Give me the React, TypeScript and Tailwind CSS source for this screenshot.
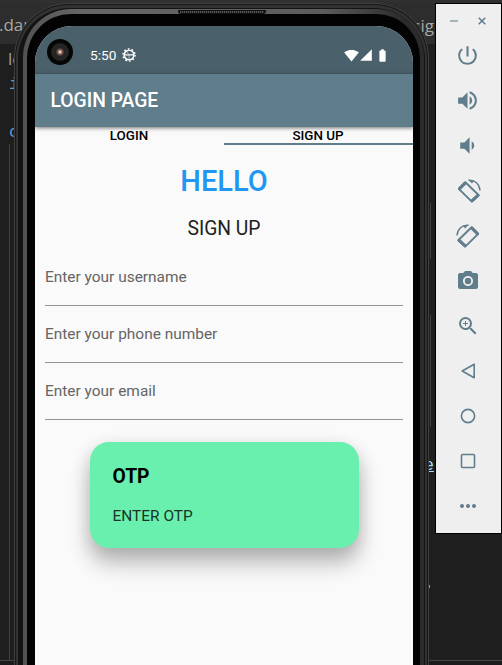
import React from "react";
import {
  MdPowerSettingsNew,
  MdVolumeUp,
  MdVolumeDown,
  MdPhotoCamera,
  MdZoomIn,
  MdSignalWifi4Bar,
  MdSignalCellular4Bar,
  MdBatteryFull,
} from "react-icons/md";

function Editor() {
  return (
    <div className="flex h-full flex-col font-['Open_Sans',sans-serif]">
      <div className="h-[3px] bg-[#303030]" />
      <div className="flex h-[43px] items-center justify-between bg-[#2d2d2d] pr-[68px] text-[17px] leading-none text-[#a8a8a0]">
        <span className="-ml-px pt-[3px]">.dart</span>
        <span className="pt-[4px]">sig</span>
      </div>
      <div className="flex flex-1 justify-between">
        <div className="ml-[9px] font-['Liberation_Mono',monospace] text-[17px] leading-[24.5px] text-[#569cd6]">
          <div className="-ml-px pt-[3px] font-['Open_Sans',sans-serif] text-[#a0a0a0]">le</div>
          <div className="pt-[2px]">im</div>
          <div className="h-[23px]" />
          <div>cl</div>
          <div className="-mt-px h-[516px] w-px bg-[#404040]" />
        </div>
        <div className="mr-[63px] flex flex-col items-end font-['Liberation_Mono',monospace] text-[17px] leading-none text-[#9cdcfe]">
          <div className="mt-[159px] mr-[8px] h-[56px] w-px bg-[#404040]" />
          <div className="mt-[56px] mr-[8px] h-[112px] w-px bg-[#404040]" />
          <div className="mt-[30px] mr-[5px] underline">e</div>
          <div className="mt-[111px] mr-[9px] h-[3px] w-px bg-[#c08a30]" />
        </div>
      </div>
      <div className="h-[5px] border-t border-[#454545] bg-[#1c1a1c]" />
    </div>
  );
}

function Gear() {
  return (
    <svg className="size-[14px]" viewBox="0 0 14 14" fill="none" stroke="white">
      <circle cx="7" cy="7" r="4.8" strokeWidth="1.6" />
      <circle cx="7" cy="7" r="6.1" strokeWidth="1.4" strokeDasharray="1.7 2.13" />
      <path d="M2.5 6.8h9" strokeWidth="1.2" />
      <path d="M7 7v4.5M7 7L4.5 3" strokeWidth=".8" opacity=".6" />
    </svg>
  );
}

function StatusBar() {
  return (
    <div className="flex h-[48px] items-center bg-[#4a606a] pt-[10px] pr-[23px] pl-[12px] text-white">
      <div className="-mt-[7px] flex size-[26px] shrink-0 items-center justify-center rounded-full bg-[#050505]">
        <div className="flex size-[18px] items-center justify-center rounded-full bg-[#242424]">
          <div className="size-[8px] rounded-full bg-[radial-gradient(circle,#e8cdbd_12%,#6d5148_45%,#242424_85%)]" />
        </div>
      </div>
      <span className="ml-[17px] pt-px text-[13.7px] leading-none">5:50</span>
      <span className="ml-[6px]"><Gear /></span>
      <span className="flex-1" />
      <MdSignalWifi4Bar className="size-[15px]" />
      <MdSignalCellular4Bar className="size-[14px]" />
      <MdBatteryFull className="ml-[2px] size-[15px]" />
    </div>
  );
}

function Field({ label }: { label: string }) {
  return (
    <div className="mx-[10px] h-[57px] border-b border-[#949494] pt-[18px] text-[15.45px] leading-[20px] text-[#656565]">
      {label}
    </div>
  );
}

function Screen() {
  return (
    <div className="h-full overflow-hidden rounded-t-[37px] bg-[#fafafa] font-[Roboto,sans-serif]">
      <StatusBar />
      <div className="relative flex h-[53px] items-center bg-[#607d8b] pt-px pl-[15.5px] text-[19.3px] font-medium text-white shadow-[0_1px_4px_rgba(0,0,0,0.55)]">
        LOGIN PAGE
      </div>
      <div className="grid h-[18px] grid-cols-2 text-center text-[13.4px] leading-[17px] font-medium text-black">
        <div className="pr-px">LOGIN</div>
        <div className="h-[18px] border-b-2 border-[#607d8b] pr-px">SIGN UP</div>
      </div>
      <div className="mt-[18px] text-center text-[29px] leading-[36px] font-medium text-[#2196f3]">HELLO</div>
      <div className="mt-[18px] text-center text-[19.3px] leading-[24px] text-[#212121]">SIGN UP</div>
      <div className="mt-[8px]">
        <Field label="Enter your username" />
        <Field label="Enter your phone number" />
        <Field label="Enter your email" />
      </div>
      <div className="mt-[22px] ml-[54.5px] h-[106px] w-[269.5px] rounded-[19px] bg-[#69f0ae] pt-[23px] pl-[23px] shadow-[0_16px_22px_0_rgba(0,0,0,0.24),0_4px_18px_rgba(0,0,0,0.13)]">
        <div className="text-[19.3px] leading-[24px] font-bold text-black">OTP</div>
        <div className="mt-[17px] text-[15.45px] leading-[20px] text-[#1b3327]">ENTER OTP</div>
      </div>
    </div>
  );
}

function Phone() {
  return (
    <div className="h-full rounded-t-[55px] bg-[#404040] px-px pt-px">
      <div className="h-full rounded-t-[54px] bg-[#171717] px-px pt-px">
        <div className="h-full rounded-t-[53px] bg-[#323232] px-[2px] pt-[3px]">
          <div className="h-full rounded-t-[51px] bg-[#141414] pt-px pr-px pl-[5px]">
            <div className="h-full rounded-t-[48px] bg-[linear-gradient(90deg,#525252,#555_2%,#666_15%,#5c5c5c_75%,#2b2b2b_95%)] pt-[5px] pr-[4px] pl-[4px]">
              <div className="mx-auto -mt-[4px] flex h-[4px] w-[88px] -translate-x-[2px] items-center rounded-b-[3px] bg-[#111] px-[2px]">
                <div className="h-[2px] w-full bg-[repeating-linear-gradient(90deg,#555_0,#555_1px,#222_1px,#222_2px)]" />
              </div>
              <div className="h-full rounded-t-[44px] bg-[#030303] pt-[12px] pr-[7px] pl-[8px]">
                <Screen />
              </div>
            </div>
          </div>
        </div>
      </div>
    </div>
  );
}

function Rotate({ flip = false }: { flip?: boolean }) {
  return (
    <svg className={flip ? "size-[24px] -scale-x-100" : "size-[24px] translate-x-px"} viewBox="0 0 24 24" fill="none" stroke="currentColor">
      <path d="M1.8 9.9L8.4 3.2L21.8 16.2L14.8 22.6Z" strokeWidth="1.9" strokeLinejoin="round" />
      <path d="M2.6 9.7L8.1 4.2M15.2 21.6L20.8 16.4" strokeWidth="3.2" strokeLinecap="round" />
      <path d="M11.5 1.3C18 .8 22.5 5 23 11.5" strokeWidth="1.4" />
      <path d="M11.3.8L17 1.6L15 4.4Z" fill="currentColor" stroke="none" />
    </svg>
  );
}

function Toolbar() {
  const tools = [
    <MdPowerSettingsNew className="size-[25px]" />,
    <MdVolumeUp className="size-[25px]" />,
    <MdVolumeDown className="size-[25px]" />,
    <Rotate />,
    <Rotate flip />,
    <MdPhotoCamera className="size-[24px]" />,
    <MdZoomIn className="size-[24px]" />,
    <svg className="size-[16px]" viewBox="0 0 16 16" fill="none" stroke="currentColor" strokeWidth="1.6"><path d="M14.2 1.2v13.6L2.2 8Z" strokeLinejoin="round" /></svg>,
    <svg className="size-[16px]" viewBox="0 0 16 16" fill="none" stroke="currentColor" strokeWidth="1.6"><circle cx="8" cy="8" r="6.6" /></svg>,
    <svg className="size-[16px]" viewBox="0 0 16 16" fill="none" stroke="currentColor" strokeWidth="1.6"><rect x="1.5" y="1.5" width="13" height="13" rx="1" /></svg>,
    <svg className="size-[16px]" viewBox="0 0 16 16" fill="currentColor"><circle cx="2" cy="8" r="2" /><circle cx="8" cy="8" r="2" /><circle cx="14" cy="8" r="2" /></svg>,
  ];
  return (
    <div className="h-full border border-black bg-[#efefef] text-[#607d8b]">
      <div className="flex h-[29px] items-center justify-between pt-[5px] pr-[15px] pl-[14px]">
        <div className="h-[2px] w-[8px] bg-[#a5b4bb]" />
        <svg className="size-[8px]" viewBox="0 0 8 8" stroke="currentColor" strokeWidth="1.5"><path d="M.7.7l6.6 6.6M7.3.7L.7 7.3" /></svg>
      </div>
      {tools.map((tool, i) => (
        <div key={i} className="flex h-[45px] items-center justify-center pr-[2px]">{tool}</div>
      ))}
    </div>
  );
}

export default function App() {
  return (
    <div className="relative h-[665px] w-[502px] overflow-hidden bg-[#1e1e1e]">
      <Editor />
      <div className="absolute top-[3px] left-[14px] h-[700px] w-[415px]"><Phone /></div>
      <div className="absolute top-[3px] left-[435px] h-[531px] w-[67px]"><Toolbar /></div>
    </div>
  );
}
